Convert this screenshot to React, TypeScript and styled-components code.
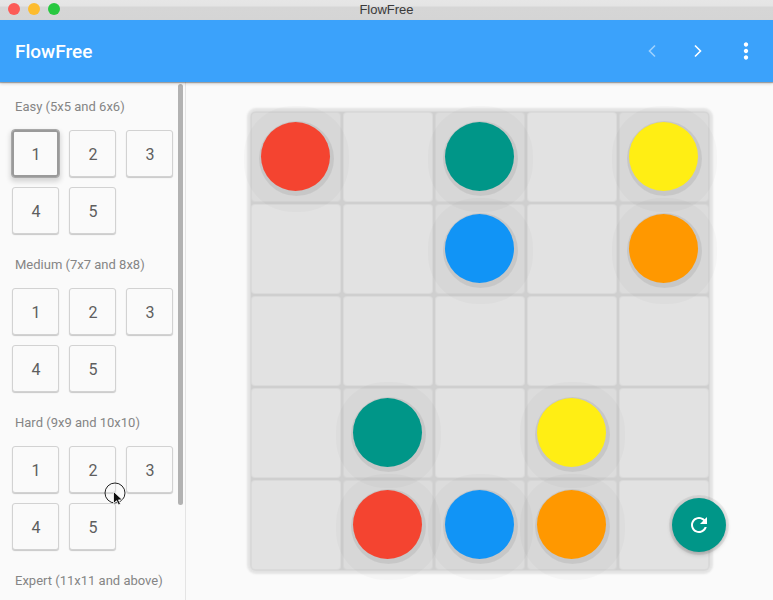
import React from 'react';
import styled, { createGlobalStyle } from 'styled-components';

const GlobalStyle = createGlobalStyle`
  html, body {
    margin: 0;
    padding: 0;
    background: #fafafa;
    overflow: hidden;
  }
  * {
    box-sizing: border-box;
  }
`;

const Window = styled.div`
  position: relative;
  width: 773px;
  height: 600px;
  display: flex;
  flex-direction: column;
  overflow: hidden;
  font-family: Roboto, "Liberation Sans", sans-serif;
  background: #fafafa;
`;

const TitleBar = styled.div`
  position: relative;
  height: 20px;
  flex: none;
  display: flex;
  align-items: center;
  justify-content: center;
  padding-bottom: 1px;
  background: linear-gradient(#e6e6e6 0, #e4e4e4 6px, #d6d6d6 7px, #d5d5d5 100%);
  font-family: "Liberation Sans", Arial, sans-serif;
  font-size: 13px;
  color: #3a3a3a;
`;

const Lights = styled.div`
  position: absolute;
  left: 8px;
  top: 3px;
  display: flex;
  gap: 8px;
`;

const Light = styled.span<{ $color: string }>`
  display: block;
  width: 12px;
  height: 12px;
  border-radius: 50%;
  background: ${(p) => p.$color};
`;

const AppBar = styled.header`
  position: relative;
  z-index: 5;
  height: 62px;
  flex: none;
  display: flex;
  align-items: center;
  padding: 0 2px 0 15px;
  background: #3ba2fb;
  box-shadow: 0 1px 1px rgba(0, 0, 0, 0.28), 0 2px 3px rgba(0, 0, 0, 0.14);
`;

const AppTitle = styled.div`
  flex: 1;
  font-size: 19px;
  font-weight: 500;
  color: #fff;
`;

const IconSlot = styled.div<{ $width: number }>`
  width: ${(p) => p.$width}px;
  display: flex;
  align-items: center;
  justify-content: center;
`;

const Body = styled.div`
  flex: 1;
  min-height: 0;
  display: flex;
`;

const Sidebar = styled.aside`
  position: relative;
  width: 186px;
  flex: none;
  overflow: hidden;
  border-right: 1px solid #e4e4e4;
  background: #fafafa;
`;

const Scrollbar = styled.div`
  position: absolute;
  left: 178px;
  top: 2px;
  width: 5px;
  height: 421px;
  border-radius: 3px;
  background: #b2b2b2;
`;

const Section = styled.section`
  margin-bottom: 6px;
`;

const SectionLabel = styled.div`
  height: 48px;
  padding-left: 15px;
  font-size: 13px;
  line-height: 50px;
  color: #858585;
`;

const LevelGrid = styled.div`
  display: grid;
  grid-template-columns: repeat(3, 47px);
  grid-auto-rows: 47px;
  gap: 10px;
  padding-left: 12px;
`;

const LevelButton = styled.button<{ $focused?: boolean }>`
  margin: 0;
  padding: 1px 0 0 1px;
  border-radius: 3px;
  font-family: inherit;
  font-size: 16px;
  color: #5e5e5e;
  background: #fafafa;
  border: 1px solid #d2d2d2;
  box-shadow: 0 1px 1px rgba(0, 0, 0, 0.2);
  ${(p) =>
    p.$focused &&
    `
    border: 2px solid #9a9a9a;
    outline: 1px solid #a8a8a8;
    box-shadow: 0 3px 5px 2px rgba(0, 0, 0, 0.14);
  `}
`;

const Main = styled.main`
  position: relative;
  flex: 1;
  display: flex;
  align-items: center;
  justify-content: center;
  background: #fafafa;
`;

const Board = styled.div`
  display: grid;
  grid-template-columns: repeat(5, 90px);
  grid-auto-rows: 90px;
  gap: 2px;
  border-radius: 5px;
  background: #cfcfcf;
  box-shadow: 0 0 1px 1px #d8d8d8, 0 0 2px 4px #e4e4e4;
`;

const Cell = styled.div<{ $filled: boolean }>`
  position: relative;
  display: flex;
  align-items: center;
  justify-content: center;
  border-radius: 4px;
  background: ${(p) => (p.$filled ? '#dcdcdc' : '#e2e2e2')};
  box-shadow: inset 0 0 1px 1px rgba(0, 0, 0, 0.035);
`;

const Halo = styled.span`
  position: absolute;
  z-index: 1;
  left: -7px;
  top: -6px;
  width: 105px;
  height: 106px;
  border-radius: 46%;
  background: rgba(0, 0, 0, 0.018);
`;

const Dot = styled.span<{ $color: string }>`
  position: relative;
  z-index: 2;
  display: block;
  width: 69px;
  height: 69px;
  margin: 0 1px 1px 0;
  border-radius: 50%;
  background: ${(p) => p.$color};
  box-shadow: 1px 2px 0 3px rgba(0, 0, 0, 0.07);
`;

const Fab = styled.button`
  position: absolute;
  z-index: 3;
  right: 47px;
  bottom: 48px;
  width: 54px;
  height: 54px;
  padding: 0;
  display: flex;
  align-items: center;
  justify-content: center;
  border: none;
  border-radius: 50%;
  background: #009688;
  box-shadow: 0 0 0 3px rgba(0, 0, 0, 0.06), 0 2px 5px rgba(0, 0, 0, 0.25);
`;

const Pointer = styled.svg`
  position: absolute;
  z-index: 10;
  left: 104px;
  top: 481px;
`;

const R = '#f44430';
const T = '#009688';
const Y = '#ffee14';
const B = '#1194f6';
const O = '#ff9800';

const board: (string | null)[][] = [
  [R, null, T, null, Y],
  [null, null, B, null, O],
  [null, null, null, null, null],
  [null, T, null, Y, null],
  [null, R, B, O, null],
];

// the last section sits below the fold, only its label is visible
const sections = [
  { label: 'Easy (5x5 and 6x6)', levels: [1, 2, 3, 4, 5] },
  { label: 'Medium (7x7 and 8x8)', levels: [1, 2, 3, 4, 5] },
  { label: 'Hard (9x9 and 10x10)', levels: [1, 2, 3, 4, 5] },
  { label: 'Expert (11x11 and above)', levels: [] as number[] },
];

export default function App() {
  return (
    <Window>
      <GlobalStyle />
      <TitleBar>
        <Lights>
          <Light $color="#fc5b57" />
          <Light $color="#fdbc2e" />
          <Light $color="#27c840" />
        </Lights>
        FlowFree
      </TitleBar>
      <AppBar>
        <AppTitle>FlowFree</AppTitle>
        <IconSlot $width={46}>
          <svg width="10" height="14" viewBox="0 0 10 14" fill="none">
            <path d="M8 1.5 2.5 7 8 12.5" stroke="#fff" strokeOpacity="0.5" strokeWidth="1.6" />
          </svg>
        </IconSlot>
        <IconSlot $width={46}>
          <svg width="10" height="14" viewBox="0 0 10 14" fill="none">
            <path d="M2 1.5 7.5 7 2 12.5" stroke="#fff" strokeWidth="1.6" />
          </svg>
        </IconSlot>
        <IconSlot $width={50}>
          <svg width="26" height="26" viewBox="0 0 24 24" fill="#fff">
            <path d="M12 8c1.1 0 2-.9 2-2s-.9-2-2-2-2 .9-2 2 .9 2 2 2zm0 2c-1.1 0-2 .9-2 2s.9 2 2 2 2-.9 2-2-.9-2-2-2zm0 6c-1.1 0-2 .9-2 2s.9 2 2 2 2-.9 2-2-.9-2-2-2z" />
          </svg>
        </IconSlot>
      </AppBar>
      <Body>
        <Sidebar>
          {sections.map((section, s) => (
            <Section key={section.label}>
              <SectionLabel>{section.label}</SectionLabel>
              <LevelGrid>
                {section.levels.map((n) => (
                  <LevelButton key={n} $focused={s === 0 && n === 1}>
                    {n}
                  </LevelButton>
                ))}
              </LevelGrid>
            </Section>
          ))}
          <Scrollbar />
        </Sidebar>
        <Main>
          <Board>
            {board.flat().map((color, i) => (
              <Cell key={i} $filled={!!color}>
                {color && <Halo />}
                {color && <Dot $color={color} />}
              </Cell>
            ))}
          </Board>
          <Fab aria-label="Restart">
            <svg width="16" height="16" viewBox="4 4 16 16" fill="#fff">
              <path d="M17.65 6.35C16.2 4.9 14.21 4 12 4c-4.42 0-7.99 3.58-7.99 8s3.57 8 7.99 8c3.73 0 6.84-2.55 7.73-6h-2.08c-.82 2.33-3.04 4-5.65 4-3.31 0-6-2.69-6-6s2.69-6 6-6c1.66 0 3.14.69 4.22 1.78L13 11h7V4l-2.35 2.35z" />
            </svg>
          </Fab>
        </Main>
      </Body>
      <Pointer width="24" height="30" viewBox="0 0 24 30" fill="none">
        <circle cx="11" cy="12" r="10" stroke="#222" strokeWidth="1" fill="rgba(255,255,255,0.15)" />
        <path d="M9.5 10.5v12l3-2.8 2 4.3 2-.9-2-4.2h4z" fill="#111" stroke="#fff" strokeWidth="0.8" />
      </Pointer>
    </Window>
  );
}
